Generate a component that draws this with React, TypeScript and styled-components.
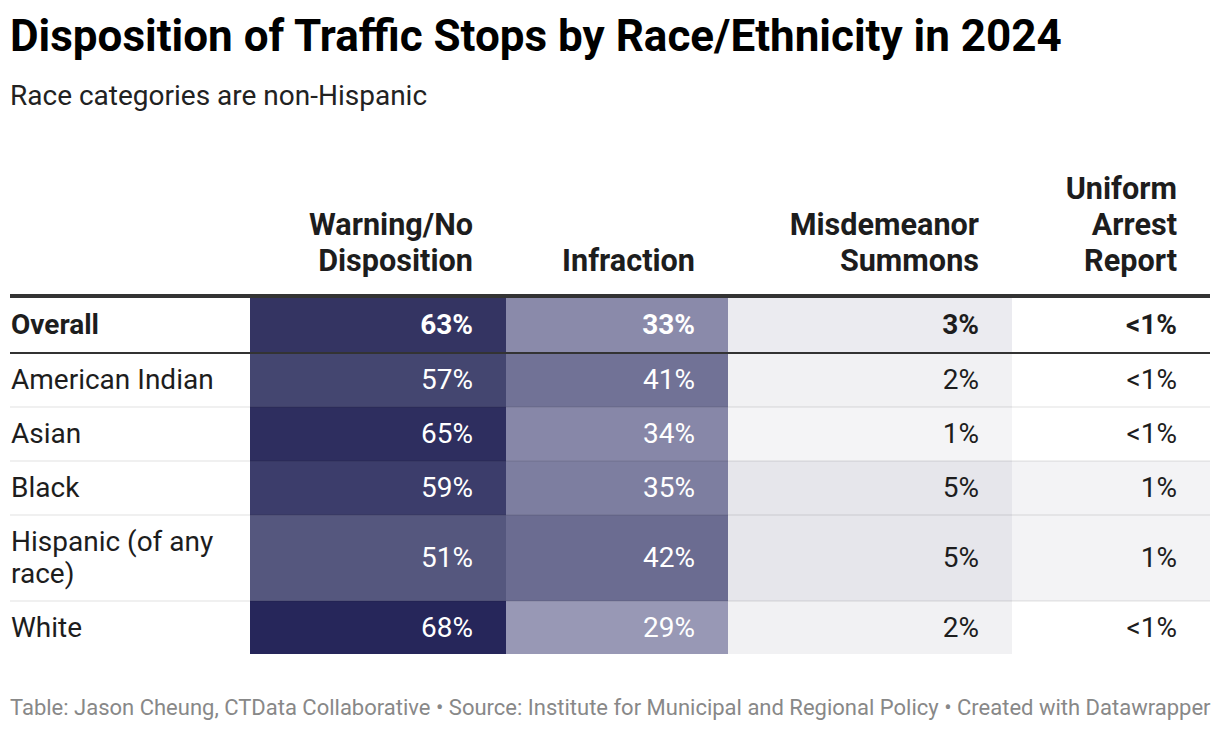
import React from 'react';
import styled, { createGlobalStyle } from 'styled-components';

const GlobalStyle = createGlobalStyle`
  html, body {
    margin: 0;
    padding: 0;
    background: #fff;
  }
  body {
    font-family: Roboto, "Liberation Sans", sans-serif;
    color: #1d1d1d;
  }
`;

interface Row {
  name: string;
  values: string[];
  colors: string[];
  total?: boolean;
}

const COLUMNS = [
  { label: ['Warning/No', 'Disposition'], width: 256, light: true },
  { label: ['Infraction'], width: 222, light: true },
  { label: ['Misdemeanor', 'Summons'], width: 284, light: false },
  { label: ['Uniform', 'Arrest', 'Report'], width: 198, light: false },
];

const ROWS: Row[] = [
  { name: 'Overall', total: true, values: ['63%', '33%', '3%', '<1%'], colors: ['#343462', '#8a8aaa', '#ebebf0', '#ffffff'] },
  { name: 'American Indian', values: ['57%', '41%', '2%', '<1%'], colors: ['#444670', '#717296', '#f1f1f3', '#ffffff'] },
  { name: 'Asian', values: ['65%', '34%', '1%', '<1%'], colors: ['#2e2e5f', '#8787a8', '#f4f4f6', '#ffffff'] },
  { name: 'Black', values: ['59%', '35%', '5%', '1%'], colors: ['#3c3d6b', '#7d7ea0', '#e6e6eb', '#f3f3f5'] },
  { name: 'Hispanic (of any race)', values: ['51%', '42%', '5%', '1%'], colors: ['#55577e', '#6b6c91', '#e6e6eb', '#f3f3f5'] },
  { name: 'White', values: ['68%', '29%', '2%', '<1%'], colors: ['#26265a', '#9898b5', '#f1f1f3', '#ffffff'] },
];

const Page = styled.div`
  padding: 10px 10px 0;
  width: 1200px;
`;

const Title = styled.h1`
  margin: 0;
  font-size: 44px;
  font-weight: 700;
  line-height: 52px;
  color: #000;
`;

const Subtitle = styled.p`
  margin: 17px 0 0;
  font-size: 28px;
  line-height: 34px;
  color: #222;
`;

const Table = styled.table`
  margin-top: 58px;
  width: 1200px;
  border-collapse: collapse;
  table-layout: fixed;
  font-size: 28px;
`;

const HeadCell = styled.th<{ $first?: boolean }>`
  text-align: ${p => (p.$first ? 'left' : 'right')};
  vertical-align: bottom;
  font-size: 30.6px;
  font-weight: 700;
  line-height: 36px;
  padding: 0 33px 15px 0;
  border-bottom: 4px solid #333;
  color: #1d1d1d;
`;

const BodyRow = styled.tr<{ $total?: boolean }>`
  border-bottom: ${p => (p.$total ? '2px solid #333' : '2px solid rgba(0, 0, 0, 0.06)')};
  font-weight: ${p => (p.$total ? 700 : 400)};
  &:last-child {
    border-bottom: none;
  }
  & > td {
    padding-top: ${p => (p.$total ? 11 : 10)}px;
    padding-bottom: ${p => (p.$total ? 11 : 10)}px;
  }
`;

const NameCell = styled.td`
  padding-right: 20px;
  line-height: 32px;
  text-align: left;
  vertical-align: middle;
`;

const ValueCell = styled.td<{ $light: boolean }>`
  padding-right: 33px;
  line-height: 32px;
  text-align: right;
  vertical-align: middle;
  color: ${p => (p.$light ? '#fff' : '#1d1d1d')};
`;

const Footer = styled.footer`
  margin-top: 41px;
  font-size: 22px;
  line-height: 26px;
  color: #888;
  white-space: nowrap;
`;

export default function App() {
  return (
    <Page>
      <GlobalStyle />
      <Title>Disposition of Traffic Stops by Race/Ethnicity in 2024</Title>
      <Subtitle>Race categories are non-Hispanic</Subtitle>
      <Table>
        <colgroup>
          <col style={{ width: 240 }} />
          {COLUMNS.map(c => (
            <col key={c.label.join()} style={{ width: c.width }} />
          ))}
        </colgroup>
        <thead>
          <tr>
            <HeadCell $first />
            {COLUMNS.map(c => (
              <HeadCell key={c.label.join()}>
                {c.label.map((l, i) => (
                  <React.Fragment key={l}>
                    {i > 0 && <br />}
                    {l}
                  </React.Fragment>
                ))}
              </HeadCell>
            ))}
          </tr>
        </thead>
        <tbody>
          {ROWS.map(r => (
            <BodyRow key={r.name} $total={r.total}>
              <NameCell>{r.name}</NameCell>
              {r.values.map((v, i) => (
                <ValueCell key={i} $light={COLUMNS[i].light} style={{ background: r.colors[i] }}>
                  {v}
                </ValueCell>
              ))}
            </BodyRow>
          ))}
        </tbody>
      </Table>
      <Footer>
        Table: Jason Cheung, CTData Collaborative • Source: Institute for Municipal and Regional Policy • Created with
        Datawrapper
      </Footer>
    </Page>
  );
}
